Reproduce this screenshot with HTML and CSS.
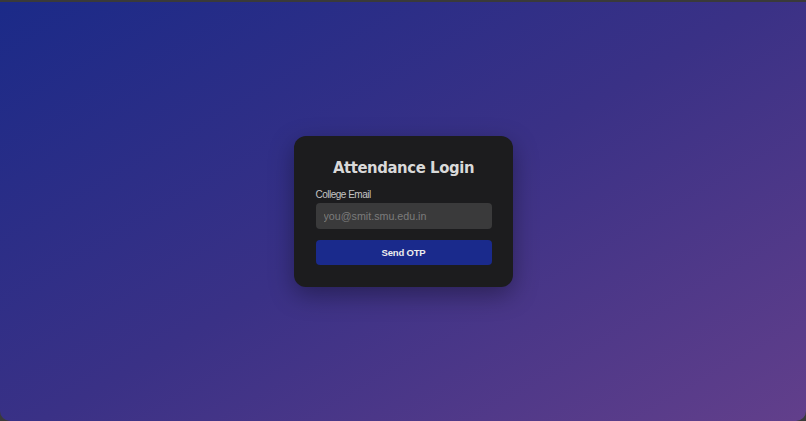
FILE: index.html
```html
<!DOCTYPE html>
<html>
<head>
<meta charset="utf-8">
<link rel="stylesheet" href="styles.css">
</head>
<body>
<div class="window">
  <div class="card">
    <h1 class="title">Attendance Login</h1>
    <label class="label" for="email">College Email</label>
    <input class="input" id="email" type="email" placeholder="you@smit.smu.edu.in">
    <button class="btn">Send OTP</button>
  </div>
</div>
</body>
</html>
```
FILE: styles.css
```css
html, body {
  margin: 0;
  padding: 0;
  height: 100%;
  background: #3a3a3a;
}
.window {
  box-sizing: border-box;
  margin-top: 2px;
  height: 419px;
  border-radius: 0 0 10px 10px;
  background: linear-gradient(150deg, #1b2a88 0%, #3a3186 50%, #623f8b 100%);
  display: flex;
  align-items: center;
  justify-content: center;
  font-family: "Liberation Sans", Arial, sans-serif;
}
.card {
  width: 219px;
  box-sizing: border-box;
  padding: 21px 21px 22px 22px;
  background: #1c1c1e;
  border-radius: 12px;
  box-shadow: 0 8px 24px rgba(0,0,0,0.35);
  display: flex;
  flex-direction: column;
}
.title {
  margin: 0 0 10px;
  text-align: center;
  font-family: "DejaVu Sans Condensed", "DejaVu Sans", Verdana, sans-serif;
  font-stretch: condensed;
  font-weight: bold;
  font-size: 16.5px;
  line-height: 22px;
  letter-spacing: -0.4px;
  color: #d9d9d9;
}
.label {
  font-family: "Liberation Sans", Arial, sans-serif;
  font-size: 10px;
  line-height: 12px;
  letter-spacing: -0.5px;
  color: #c4c4c4;
  margin-bottom: 2px;
}
.input {
  box-sizing: border-box;
  height: 26px;
  border: none;
  border-radius: 4px;
  background: #3a3a3b;
  padding: 0 8px;
  font-family: "Liberation Sans", Arial, sans-serif;
  font-size: 10.7px;
  color: #ddd;
  outline: none;
  margin-bottom: 11px;
}
.input::placeholder {
  color: #7c7c7c;
}
.btn {
  height: 25px;
  border: none;
  border-radius: 4px;
  background: #1a2a8c;
  color: #eeeeee;
  font-family: "Liberation Sans", Arial, sans-serif;
  font-weight: bold;
  font-size: 9.5px;
  letter-spacing: -0.2px;
  cursor: pointer;
}
```
